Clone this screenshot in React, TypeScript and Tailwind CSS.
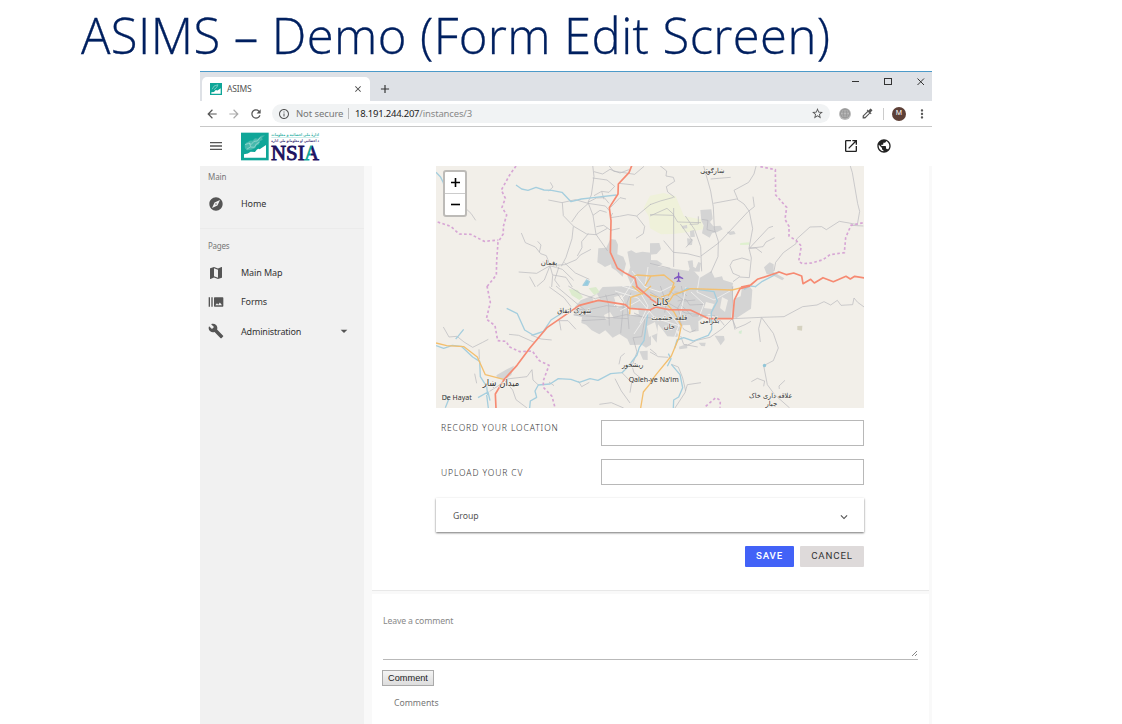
import React from "react";
import {
  MdAdd, MdArrowBack, MdArrowDropDown, MdArrowForward, MdBuild, MdBurstMode, MdClose, MdColorize,
  MdExpandMore, MdExplore, MdInfoOutline, MdLanguage, MdMap, MdMenu, MdMoreVert, MdOpenInNew,
  MdPublic, MdRefresh, MdStarBorder,
} from "react-icons/md";

const arabic = "'DejaVu Sans', 'Noto Sans', sans-serif";

function Favicon() {
  return (
    <svg width="12" height="12" viewBox="0 0 27 27">
      <rect width="27" height="27" fill="#0fa698" />
      <path d="M3 24V21L9 20L13 16L17 17L24 12V24Z" fill="#fff" />
      <path d="M5 14L9 7L18 4L15 10L9 15" fill="none" stroke="#83cfc8" strokeWidth="2" />
    </svg>
  );
}

function Logo() {
  return (
    <svg className="overflow-visible" width="84" height="32" viewBox="0 0 252 96" role="img" aria-label="NSIA">
      <defs>
        <linearGradient id="letterA" x1="0" x2="1" y1="0" y2="0.15">
          <stop offset="0.48" stopColor="#0fa698" />
          <stop offset="0.52" stopColor="#1d1260" />
        </linearGradient>
      </defs>
      <rect x="0" y="5" width="83" height="83" fill="#0fa698" />
      <path d="M9 80V70Q22 69 29 62L42 63Q51 49 56 55L75 42V80Z" fill="#fff" />
      <path d="M12 52Q8 36 21 33Q25 27 34 29L42 22L51 23L60 14L72 13L63 20L65 26L56 31L54 40L46 44L43 51L31 56L19 58Z" fill="#48b9ad" />
      <path d="M12 41L23 37L31 40L39 31L49 30L58 19M17 55L28 48L40 49L46 39L56 33M25 35L29 47" fill="none" stroke="#b5e3dd" strokeWidth="1.8" />
      <text x="234" y="14" direction="rtl" textAnchor="start" fontFamily={arabic} fontSize="12" fontWeight="bold" fill="#36b3a9" textLength="143" lengthAdjust="spacingAndGlyphs">ادارهٔ ملی احصائیه و معلومات</text>
      <path d="M91 19.500H233" stroke="#9edad5" strokeWidth="1.500" />
      <text x="234" y="32" direction="rtl" textAnchor="start" fontFamily={arabic} fontSize="12" fontWeight="bold" fill="#45397c" textLength="143" lengthAdjust="spacingAndGlyphs">د احصائیې او معلوماتو ملي اداره</text>
      <g fontFamily="'Liberation Serif', serif" fontSize="63" strokeWidth="2.500">
        <text x="90" y="87" fill="#1d1260" stroke="#1d1260" textLength="101" lengthAdjust="spacingAndGlyphs">NSI</text>
        <text x="190" y="87" fill="url(#letterA)" stroke="url(#letterA)" textLength="44" lengthAdjust="spacingAndGlyphs">A</text>
      </g>
    </svg>
  );
}

function Label({ x, y, w, size = 21, children }: { x: number; y: number; w: number; size?: number; children: string }) {
  return (
    <text x={x} y={y} textAnchor="middle" textLength={w} lengthAdjust="spacingAndGlyphs" fontFamily={arabic} fontSize={size} fill="#333" stroke="#f7f5f0" strokeWidth="3" paintOrder="stroke">
      {children}
    </text>
  );
}

const landNW = "M487 250L511 248L523 222L539 224L546 239L544 268L562 275L570 296L560 335L541 317L527 308L525 298L507 306L497 299L484 292ZM574 260L586 256L600 264L619 260L645 263V368H589L574 332L583 307Z";
const landNE = "M0 235L28 234L33 252L20 267L0 269ZM0 285L21 286L38 297L18 307L0 309ZM151 135L184 133L188 161L180 171L190 184L211 182L218 193L200 202L186 205L179 218L156 205L161 181L154 167ZM95 183L111 180L112 190L98 191ZM120 198L132 195L135 215L121 217ZM111 220L128 222L126 240L113 241ZM230 201L252 198L257 207L240 210ZM342 307L359 292L371 298L371 322L403 340L397 346L366 330L350 327ZM0 301L55 309L134 320L150 338L184 318L194 338L216 334L220 345L249 354L247 368H0ZM122 300L137 310L145 291L153 294L149 320L116 319ZM113 288L128 286L130 304L118 309Z";
const landSW = "M417 62L434 43L482 24L500 3L580 0H645V176L630 185L617 176L582 177L574 159L550 144L530 155L508 133L490 145L467 133L450 116L436 111L438 94L413 87ZM181 268L214 249L234 239L226 267L208 281L183 276ZM610 196L635 194V222L621 221Z";
const landSE = "M0 0H250L244 96L200 96L177 83L145 106L146 135L126 138L120 117L94 118L82 153L52 151L39 133L24 115L20 170L0 144ZM253 38L272 31L276 5L298 0L307 12L303 68L260 96L248 94ZM194 149L222 150L224 162L212 178ZM87 182L111 174L112 187L88 190ZM146 170L167 170L165 181L154 180Z";

const roadsNW = "M470 0L474 35L466 90L456 112L471 151L480 208L515 258M470 39L513 45L536 64L519 82L497 79L474 92M474 20L500 27L522 13L552 24L579 14M517 0L533 19L557 22L596 28L624 4M549 55L594 60M337 105L378 113L418 104L456 115L508 123L520 137M379 113L382 152L413 184L452 207L480 209L514 190M412 184L408 221L390 277L376 304M457 115L427 142L407 171M524 158L550 154L576 149L602 153L645 117M524 156L530 144M256 204L268 233L298 246L314 266L331 272L342 301M305 229L315 240L310 262M342 302L302 325L248 321M342 302L325 345L303 364M342 302L350 331L347 366M342 302L379 313L413 346M342 302L386 299L421 284L433 270L465 253M457 206L437 230L438 248L424 273M471 151L492 136L512 142M456 112L481 99L505 98L519 115M481 185L503 181L524 196L551 190M523 128L552 98L570 102M497 79L504 103M602 153L626 184L622 206L600 220M80 122L105 145L119 166M343 52L351 66L338 78M281 335L298 366M351 330L390 337L409 366M369 305L356 345L371 365M385 293L418 324L460 343";
const roadsNE = "M30 2L50 18L48 33L70 37L74 49L49 65L53 81L74 97M0 119L31 108L71 97M160 0L182 78L190 126L193 191L205 229L204 275L182 324M182 42L242 37M190 115L260 102L282 117L298 139L308 191L297 250L304 279L298 338M319 0L312 27L296 52L252 76L263 102M309 95L313 125L294 140L207 233L153 273M298 250L327 219L356 188L369 184M298 250L339 245L348 231L374 218M298 249L318 249L336 263M299 286L276 279L248 287L240 302L249 325L270 334M249 350L268 336L298 338M71 129V306M71 151L0 149M71 151L83 171L153 173M106 153L134 194L152 245L155 319M119 178L145 177L145 154M72 149L51 130L0 153M41 227L70 262L112 266L151 276M0 295L61 310M372 318L377 292L400 263L438 236L440 222L480 186L515 185L529 194L568 169L597 174L622 179L629 139L623 116L607 23L600 0M603 181L640 183M155 163L174 166L171 194L195 200M91 177L126 226L108 247";
const roadsSW = "M340 3L384 35L405 62M360 0L428 57L460 82M397 0L434 23L480 39M22 123L39 153L63 151L84 168L110 184L140 169L157 160M129 190L130 220M219 145L248 148L297 170M285 147L315 159L347 162M116 263L122 292M203 280L273 272L288 251L291 282L307 297M203 280L230 312L240 341L273 366M204 287L183 302L161 316M339 288L354 299M427 285L437 302L460 289M490 355L526 350L563 366M537 278L556 315L582 351M556 258L587 290L582 320M585 230L594 260L615 277M370 104L375 133M365 104L396 104L420 130M413 87L508 94L576 98M418 68L450 73L511 59L576 65M437 104L507 100L570 86L645 96M509 26L518 57L520 119M480 37L544 23L563 49L554 142M585 20L573 51L579 129M594 81L627 97L617 152L591 155L603 198L590 235M566 202L554 212L549 235";
const roadsSE = "M0 18L50 48L106 81L153 87M31 0L49 51L44 80M94 0L101 36L83 66L94 101M58 16L83 30L104 45L136 42M73 18L99 20L111 30M83 45L108 40L119 57L165 55M93 57L127 90L195 89M247 2L249 98L334 94L402 92L458 62L501 57L522 47L542 57L562 43L573 58L608 56L612 36L623 49L645 65M334 94L370 142L385 186L370 224L341 239L352 296L374 326L419 366M247 98L258 127L285 116L303 106M334 96L326 128L331 168M247 98L217 128L180 154L140 163L112 178M405 283L387 300L388 309M304 287L322 277L343 285M344 284L341 301M64 235L85 243L98 276L107 315M153 290L112 296L105 320L75 366M92 150L101 175L143 183M0 198L25 212L55 214M0 189L20 205M248 99L255 131M84 91L101 130L120 139L137 132M180 105L211 103L223 118";

function CityMap() {
  return (
    <svg className="block h-[242px] w-[428px] bg-[#f2efe9]" viewBox="436 166 428 242">
      <g fill="#d4d4d4">
        <path transform="translate(436 165) scale(.333333)" d={landNW} />
        <g transform="translate(650 165) scale(.333333)">
          <path fill="#eff1da" d="M0 92L41 84L77 94L102 154L153 163L163 192L118 201L69 207L33 208L0 190Z" />
          <path fill="#eff1da" d="M0 92L-19 129L-4 154L0 190Z" />
          <path d={landNE} />
          <path fill="#dff0cf" d="M271 234L298 232L299 239L270 240Z" />
        </g>
        <g transform="translate(436 286) scale(.333333)">
          <path d={landSW} />
          <path fill="#dcebcd" d="M398 9L425 12L441 34L430 42L407 28ZM458 7L480 3L491 18L475 27Z" />
        </g>
        <g transform="translate(650 286) scale(.333333)">
          <path d={landSE} />
          <path fill="#d5d2c0" d="M442 120L457 119L456 134L442 132Z" />
          <path fill="#d5ecd2" d="M267 136L276 133L274 144L266 142Z" />
        </g>
        <path fill="#f0ede7" d="M628 309L638 308L639 314L630 316ZM647 326L655 322L658 333L649 337ZM614 297L622 295L625 304L617 308ZM592 297L597 294L600 299L594 302ZM676 330L682 333L679 337ZM706 302L714 304L712 309L704 308ZM722 297L728 300L725 312L720 308ZM604 315L610 312L614 318L606 320Z" />
      </g>

      <g fill="none" stroke="#b9b9bd" strokeWidth="2.100" strokeLinejoin="round">
        <path transform="translate(436 165) scale(.333333)" d={roadsNW} />
        <path transform="translate(650 165) scale(.333333)" d={roadsNE} />
        <path transform="translate(436 286) scale(.333333)" d={roadsSW} />
        <path transform="translate(650 286) scale(.333333)" d={roadsSE} />
      </g>
      <path d="M622 286L640 292L648 306L640 323M632 271L645 287L660 292L672 286M635 278L624 296L614 306M648 267L645 287M640 300L620 311M665 308L679 325L671 347M650 310L634 334M686 287L680 316M700 274L697 292L714 300L730 291M691 292L704 304L699 317M615 291L638 298L655 318L686 328" fill="none" stroke="#f1efed" strokeWidth=".9" />

      <g fill="none" stroke="#a5cede" strokeWidth="4" strokeLinejoin="round">
        <path transform="translate(436 165) scale(.333333)" d="M0 22L13 35L22 53L25 70M240 60L257 72L276 76L300 67L324 75L347 76L378 82L405 110L436 102L472 98L541 90" />
        <path fill="#92cce0" transform="translate(436 165) scale(.333333)" d="M441 361L452 345L460 350L455 361Z" />
        <path transform="translate(650 165) scale(.333333)" d="M315 366L337 349L370 332L387 319" />
        <g transform="translate(436 286) scale(.333333)">
          <path d="M0 179L23 187L49 178L76 181L110 213L131 226L133 272L152 302L155 327M83 130L66 151L59 159M212 67L244 83L266 132L291 147L322 136L345 102L388 75M306 297L342 294L367 278L405 280L430 289L462 278L486 283L524 263L558 260L575 243L603 207L610 184L624 164L635 86M307 297L297 315L302 334L283 345L281 366M29 328L37 343L28 365M126 335L156 318L162 344M152 327L157 366" />
        </g>
        <path transform="translate(650 286) scale(.333333)" d="M74 187L81 162L101 155L130 165L175 148L185 131L184 79L202 45L192 17L141 10L111 7L88 23M52 241L63 218L55 203M64 235L90 266L98 305L86 333L71 342L70 366M282 10L300 0L318 2" />
      </g>
      <circle cx="764.500" cy="365.500" r="1.700" fill="#92c6d8" />

      <g fill="none" stroke="#d7a6d5" strokeWidth="5" strokeDasharray="8 7">
        <path transform="translate(436 165) scale(.333333)" d="M240 3L221 30L196 75L208 100L198 127L212 150L202 184L202 206L186 232L182 286L181 330L153 365M5 171L44 184L70 207L104 208L145 229L187 225" />
        <path transform="translate(650 165) scale(.333333)" d="M331 5L376 14L377 90L410 127L405 163L417 184L417 213L439 227L454 243L446 289L457 296L486 294L519 284L540 269L583 263L587 218L603 181L645 172" />
        <path transform="translate(436 286) scale(.333333)" d="M153 0L163 49L151 99L177 119L185 164L211 166L219 182L251 197L289 195L310 224L339 238L322 284L322 304L348 331L357 365" />
        <path transform="translate(650 286) scale(.333333)" d="M167 361L197 335L211 343L210 365" />
      </g>
      <g fill="none" stroke="#f3bf6e" strokeWidth="4" strokeLinejoin="round">
        <path transform="translate(436 286) scale(.333333)" d="M0 171L32 179L84 182L124 213L148 266L203 280M581 85L584 34L620 22L645 0M589 0L606 14L621 25M645 290L622 318L614 366" />
        <path transform="translate(650 286) scale(.333333)" d="M0 26L37 40L57 47L70 27L122 8L246 12L275 5M54 30L75 0M45 48L72 78L94 119L86 157L64 210L23 260L0 289" />
        <path d="M632 277L637 275L651 276L664 275L674 283L670 294L661 297M651 276L645 286" strokeWidth="1.300" />
      </g>
      <g fill="none" stroke="#f68a72" strokeWidth="5" strokeLinejoin="round">
        <path transform="translate(436 165) scale(.333333)" d="M588 0L579 23L547 57L546 87L520 128L525 167L523 262L544 309L569 325L597 340L603 366" />
        <path transform="translate(650 165) scale(.333333)" d="M273 366L302 360L322 343L388 321L410 329L431 324L455 333L459 356L482 343L493 354L519 338L550 350L588 334L601 342L614 334L645 339" />
        <path transform="translate(436 286) scale(.333333)" d="M180 366L178 324L204 281L243 238L281 187L334 124L430 58L487 43L568 56L580 67L645 72M600 0L645 38" />
        <path transform="translate(650 286) scale(.333333)" d="M0 72L17 63L56 71L121 72L177 98H248L253 42L270 8L300 0M0 38L22 52" />
      </g>

      <g transform="translate(436 165) scale(.333333)">
        <Label x={339} y={300} w={50}>پغمان</Label>
        <Label x={829} y={24} w={72}>ښارګوټی</Label>
        <Label x={674} y={420} w={51} size={27}>کابل</Label>
        <Label x={415} y={445} w={103}>شهرک اتفاق</Label>
        <Label x={700} y={466} w={108}>قلعه حشمت</Label>
        <Label x={700} y={493} w={33}>خان</Label>
        <Label x={821} y={475} w={58}>بگرامی</Label>
        <Label x={590} y={605} w={64}>ریشخور</Label>
        <Label x={195} y={664} w={110} size={27}>میدان ښار</Label>
        <Label x={1004} y={699} w={130}>علاقه داری خاک</Label>
        <Label x={1006} y={724} w={35}>جبار</Label>
        <text x="578" y="651" fontFamily="'Noto Sans', sans-serif" fontSize="21" fill="#333" textLength="150">Qaleh-ye Na'im</text>
        <text x="17" y="705" fontFamily="'Noto Sans', sans-serif" fontSize="21" fill="#333" textLength="90">De Hayat</text>
      </g>
      <path transform="translate(674 272) scale(.46)" fill="#8058c2" d="M10 0L8.500 2V8L0 13V15.500L8.500 13V18L5.500 20.500V22L10 20.500L14.500 22V20.500L11.500 18V13L20 15.500V13L11.500 8V2Z" />
    </svg>
  );
}

function Sidebar() {
  const row = "flex h-[29px] items-center pl-2 text-[9px] tracking-[-0.100px] text-[#333]";
  const icon = "mr-[17px] size-4 shrink-0 text-[#555]";
  return (
    <aside className="w-[164px] shrink-0 bg-[#f1f1f1]">
      <div className="h-[63px] border-b border-[#ebebeb] pt-[4px]">
        <div className="pl-2 text-[8px] leading-[14px] tracking-[-0.100px] text-[#777]">Main</div>
        <a className={`${row} mt-[5px]`}><MdExplore className={icon} /><span className="pt-px">Home</span></a>
      </div>
      <div className="pt-[10px]">
        <div className="pl-2 text-[8px] leading-[14px] tracking-[-0.250px] text-[#777]">Pages</div>
        <a className={`${row} mt-[5px]`}><MdMap className={icon} /><span className="pt-px">Main Map</span></a>
        <a className={row}><MdBurstMode className={icon} /><span className="pt-px">Forms</span></a>
        <a className={row}><MdBuild className={icon} /><span className="pt-[2px] tracking-[-0.180px]">Administration</span><MdArrowDropDown className="ml-auto mr-[12px] size-4 text-[#555]" /></a>
      </div>
    </aside>
  );
}

export default function App() {
  return (
    <div className="h-[724px] w-[1122px] overflow-hidden bg-white font-['Noto_Sans','Open_Sans',sans-serif]">
      <h1 className="h-[71px] whitespace-nowrap pl-[81px] font-['Open_Sans',sans-serif] text-[49px] font-light leading-[71px] tracking-[0.400px] text-[#002060] [-webkit-text-stroke:0.3px_#002060]">ASIMS – Demo (Form Edit Screen)</h1>
      <div className="ml-[200px] flex h-[653px] w-[732px] flex-col border-t border-[#4c9ac9]">
        <div className="flex h-[29px] shrink-0 bg-[#dee1e6] pl-[2px]">
          <div className="mt-[5px] flex h-6 w-[168px] items-center rounded-t-[5px] bg-white pl-2 pr-[7px]">
            <Favicon />
            <span className="ml-[5px] text-[8.500px] tracking-[-0.200px] text-[#555]">ASIMS</span>
            <MdClose className="ml-auto size-[10px] text-[#444]" />
          </div>
          <MdAdd className="ml-2 mt-[10px] size-[14px] text-[#333]" />
          <svg className="ml-auto mr-[7px] mt-[4px]" width="75" height="12" fill="none" stroke="#333">
            <path d="M2 5.500H9M67.500 2.500L74 9M74 2.500L67.500 9" />
            <rect x="34.500" y="2.500" width="7" height="6" />
          </svg>
        </div>
        <div className="flex h-[26px] shrink-0 items-center border-b border-[#c8c8c8] bg-white pl-[5px] text-[#555]">
          <MdArrowBack className="size-[14px]" />
          <MdArrowForward className="ml-2 size-[14px] text-[#aaa]" />
          <MdRefresh className="ml-2 size-[14px]" />
          <div className="ml-[9px] flex h-[19px] w-[558px] items-center rounded-full bg-[#f1f3f4] pl-[6px] pr-[6px] text-[9.500px]">
            <MdInfoOutline className="size-[12px]" />
            <span className="ml-[6px] w-[52px] whitespace-nowrap pt-px tracking-[-0.100px] text-[#777]">Not secure</span>
            <span className="mr-[6px] h-[11px] w-px bg-[#bbb]" />
            <span className="pt-px tracking-[-0.220px] text-[#222]">18.191.244.207</span><span className="pt-px tracking-[-0.150px] text-[#888]">/instances/3</span>
            <MdStarBorder className="ml-auto size-[13px]" />
          </div>
          <span className="ml-[9px] flex size-3 items-center justify-center rounded-full bg-[#bbb]"><MdLanguage className="size-[13px] text-[#999]" /></span>
          <MdColorize className="ml-[10px] size-[13px]" />
          <span className="ml-[9px] h-3 w-px bg-[#ccc]" />
          <span className="ml-2 flex size-[14px] items-center justify-center rounded-full bg-[#5d4037] text-[7px] text-white">M</span>
          <MdMoreVert className="ml-[9px] size-[14px]" />
        </div>
        <header className="flex h-[39px] shrink-0 items-center bg-white pb-px pl-2">
          <MdMenu className="size-4 text-[#555]" />
          <div className="ml-[17px] h-[30px]"><Logo /></div>
          <MdOpenInNew className="ml-auto size-4 text-[#222]" />
          <MdPublic className="ml-[17px] mr-10 size-4 text-[#222]" />
        </header>
        <div className="flex min-h-0 flex-1">
          <Sidebar />
          <main className="flex-1 bg-[#f9f9f9] pl-2 pr-[3px]">
            <section className="h-[425px] border-b border-[#e8e8e8] bg-white pl-16">
              <div className="relative w-[428px]">
                <CityMap />
                <div className="absolute left-[7px] top-[4px] flex w-6 flex-col rounded-[3px] border-2 border-[#bdbbb8] bg-white">
                  <button className="flex h-[22px] items-center justify-center border-b border-[#ccc]"><svg width="9" height="9"><path d="M4.500 0V9M0 4.500H9" stroke="#000" strokeWidth="1.600" /></svg></button>
                  <button className="flex h-[21px] items-center justify-center"><svg width="9" height="9"><path d="M0 4.500H9" stroke="#000" strokeWidth="1.600" /></svg></button>
                </div>
              </div>
              <div className="w-[428px] text-[8.500px] font-light tracking-[0.900px] text-[#333]">
                <label className="mt-3 flex h-[26px] justify-between pl-[5px]"><span className="pt-[2px]">RECORD YOUR LOCATION</span><input className="w-[263px] border border-[#b8b8b8]" /></label>
                <label className="mt-[13px] flex h-[26px] justify-between pl-[5px]"><span className="pt-2">UPLOAD YOUR CV</span><input className="w-[263px] border border-[#b8b8b8]" /></label>
              </div>
              <div className="mt-[13px] flex h-[34px] w-[428px] items-center justify-between bg-white pl-[17px] pr-[13px] pt-[3px] text-[8.700px] text-[#555] shadow-[0_1px_2px_rgba(0,0,0,0.55)]">Group<MdExpandMore className="size-[14px]" /></div>
              <div className="mt-[14px] flex w-[428px] justify-end gap-[6px] font-[Roboto,sans-serif] text-[9.700px] font-medium tracking-[0.850px]">
                <button className="h-[21px] w-[49px] rounded-[1px] bg-[#4262f7] text-white">SAVE</button>
                <button className="h-[21px] w-[64px] rounded-[1px] bg-[#dedada] font-normal text-[#333]">CANCEL</button>
              </div>
            </section>
            <section className="mt-[3px] h-[132px] bg-white px-[11px] pt-[20px]">
              <div className="relative h-[46px] border-b-[1.500px] border-[#b9b9b9] text-[8.700px] leading-[15px] tracking-[-0.130px] text-[#888]">Leave a comment
                <svg className="absolute bottom-[2px] right-0" width="7" height="7"><path d="M1 6L6 1M4 6L6 4" stroke="#888" /></svg>
              </div>
              <button className="-ml-px mt-[10px] block h-[16px] w-[52px] border border-[#aaa] bg-linear-to-b from-[#f4f4f4] to-[#ddd] font-['Liberation_Sans',sans-serif] text-[9.200px] leading-[14px] text-[#222]">Comment</button>
              <div className="ml-[11px] mt-[10px] text-[8.700px] leading-[14px] text-[#777]">Comments</div>
            </section>
          </main>
        </div>
      </div>
    </div>
  );
}
